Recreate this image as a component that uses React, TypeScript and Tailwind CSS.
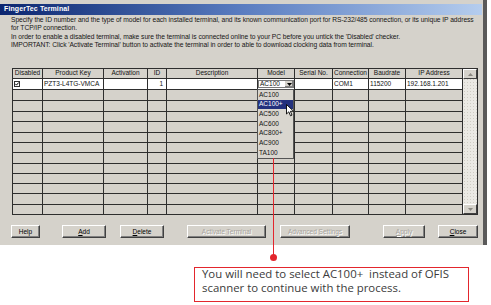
import React from 'react';

const colW = [29, 60, 43, 18, 90, 36, 37, 35, 36, 56];
const headers = ['Disabled', 'Product Key', 'Activation', 'ID', 'Description', 'Model', 'Serial No.', 'Connection', 'Baudrate', 'IP Address'];
const models = ['AC100', 'AC100+', 'AC500', 'AC600', 'AC800+', 'AC900', 'TA100'];
const emptyRows = 12;

function WinButton({ children, className = '', disabled = false }: { children: React.ReactNode; className?: string; disabled?: boolean }) {
  return (
    <div
      className={`h-[13px] flex items-center justify-center border border-t-white border-l-white border-r-[#404040] border-b-[#404040] shadow-[inset_-1px_-1px_0_#808080] text-[6.5px] ${
        disabled ? 'text-[#a7a49d] [text-shadow:1px_1px_0_#fff]' : 'text-black'
      } ${className}`}
    >
      {children}
    </div>
  );
}

function Checkbox() {
  return (
    <svg width="6" height="6" viewBox="0 0 6 6" className="ml-[1px]">
      <rect x="0.5" y="0.5" width="5" height="5" fill="#fff" stroke="#333" />
      <path d="M1.3 2.8 L2.5 4.1 L4.7 1.5" fill="none" stroke="#000" strokeWidth="1" />
    </svg>
  );
}

function Cursor() {
  return (
    <svg width="9" height="13" viewBox="0 0 9 13" className="absolute left-[274px] top-[36px]">
      <path d="M0.5 0.5 L0.5 10 L2.8 7.8 L4.5 11.8 L6 11.1 L4.4 7.3 L7.6 7.3 Z" fill="#fff" stroke="#000" strokeWidth="0.9" strokeLinejoin="round" />
    </svg>
  );
}

export default function App() {
  const cell = 'bg-[#d5d2cb]';
  return (
    <div className="relative w-[491px] h-[305px] bg-white overflow-hidden font-['Liberation_Sans',Arial,sans-serif]">
      {/* dialog window */}
      <div className="w-[487px] h-[245px] bg-[#d5d2cb] border-r-[4px] border-r-[#5a5a5a] pt-[4px]">
        <div className="h-[11px] mr-[1px] bg-gradient-to-r from-[#0c2670] via-[#5a7cc0] to-[#b5cdee] flex items-center pl-[4px]">
          <span className="text-white font-bold text-[7px] tracking-[0.1px]">FingerTec Terminal</span>
        </div>

        <div className="h-[53px] pl-[11px] pt-[1px] text-[6.7px] leading-[8.4px] text-[#151515] tracking-[-0.05px]">
          <div>Specify the ID number and the type of model for each installed terminal, and its known communication port for RS-232/485 connection, or its unique IP address</div>
          <div>for TCP/IP connection.</div>
          <div>In order to enable a disabled terminal, make sure the terminal is connected online to your PC before you untick the 'Disabled' checker.</div>
          <div>IMPORTANT: Click 'Activate Terminal' button to activate the terminal in order to able to download clocking data from terminal.</div>
        </div>

        {/* grid */}
        <div className="relative ml-[12px] flex">
          <div className="grid grid-cols-[29px_60px_43px_18px_90px_36px_37px_35px_36px_56px] grid-rows-[9px_10px_10px_10px_9px_10px_9px_9px_10px_9px_9px_9px_10px_9px] gap-px bg-[#2e2e2e] p-px pr-0 text-[6.5px] text-[#111]">
            {headers.map((h) => (
              <div key={h} className={`${cell} flex items-center justify-center leading-none`}>
                {h}
              </div>
            ))}
            <div className="bg-white flex items-center"><Checkbox /></div>
            <div className="bg-white flex items-center pl-[1px] leading-none">PZT3-L4TG-VMCA</div>
            <div className="bg-white" />
            <div className="bg-white flex items-center justify-end pr-[3px] leading-none">1</div>
            <div className="bg-white" />
            <div className="bg-white flex items-center">
              <div className="flex-1 h-[8px] flex items-center border border-[#7a7a7a] bg-white pl-[1px] leading-none">
                AC100
                <div className="ml-auto w-[9px] h-full bg-[#d5d2cb] border-l border-l-white shadow-[inset_-1px_-1px_0_#808080] flex items-center justify-center">
                  <svg width="5" height="3" viewBox="0 0 5 3"><path d="M0 0 H5 L2.5 3 Z" fill="#000" /></svg>
                </div>
              </div>
            </div>
            <div className="bg-white" />
            <div className="bg-white flex items-center pl-[1px] leading-none">COM1</div>
            <div className="bg-white flex items-center pl-[1px] leading-none">115200</div>
            <div className="bg-white flex items-center pl-[1px] leading-none">192.168.1.201</div>
            {Array.from({ length: emptyRows * colW.length }).map((_, i) => (
              <div key={i} className={cell} />
            ))}
          </div>

          {/* scrollbar */}
          <div className="w-[16px] flex flex-col border border-[#2e2e2e] bg-[#ebe9e4] bg-[radial-gradient(#cfccc4_0.6px,transparent_0.7px)] bg-[length:3px_3px]">
            <div className="h-[10px] bg-[#d5d2cb] border border-t-white border-l-white border-r-[#404040] border-b-[#404040] flex items-center justify-center">
              <svg width="5" height="3" viewBox="0 0 5 3"><path d="M0 3 H5 L2.5 0 Z" fill="#8a8780" /></svg>
            </div>
            <div className="flex-1" />
            <div className="h-[10px] bg-[#d5d2cb] border border-t-white border-l-white border-r-[#404040] border-b-[#404040] flex items-center justify-center">
              <svg width="5" height="3" viewBox="0 0 5 3"><path d="M0 0 H5 L2.5 3 Z" fill="#8a8780" /></svg>
            </div>
          </div>

          {/* open dropdown list */}
          <div className="absolute left-[245px] top-[21px] w-[37px] h-[70px] bg-[#d9d6cf] border border-[#555] flex flex-col text-[6.5px] text-[#111]">
            {models.map((m) => (
              <div
                key={m}
                className={`h-[9.7px] flex items-center pl-[1px] leading-none ${m === 'AC100+' ? 'bg-[#23317e] text-white' : ''}`}
              >
                {m}
              </div>
            ))}
          </div>
          <Cursor />
        </div>

        {/* buttons */}
        <div className="flex mt-[10px]">
          <WinButton className="ml-[11px] w-[29px]">Help</WinButton>
          <WinButton className="ml-[22px] w-[44px]"><span className="underline">A</span>dd</WinButton>
          <WinButton className="ml-[14px] w-[44px]"><span className="underline">D</span>elete</WinButton>
          <WinButton disabled className="ml-[23px] w-[79px]">Activate Terminal</WinButton>
          <WinButton disabled className="ml-[14px] w-[70px]">Advanced Settings</WinButton>
          <WinButton disabled className="ml-[33px] w-[42px]"><span className="underline">A</span>pply</WinButton>
          <WinButton className="ml-[13px] w-[40px]"><span className="underline">C</span>lose</WinButton>
        </div>
      </div>

      {/* callout connector */}
      <div className="absolute left-[273px] top-[158px] w-px h-[99px] bg-[#e3262d]" />
      <div className="absolute left-[269.5px] top-[253.5px] w-[7px] h-[7px] rounded-full bg-[#e3262d]" />

      {/* callout box */}
      <div className="ml-[194px] mt-[22px] w-[275px] h-[35px] border border-[#e3262d] pl-[7px] font-['Open_Sans',sans-serif] text-[11.4px] leading-[13.5px] text-[#3b3b3b]">
        <div className="-mt-[1px]">You will need to select AC100+&nbsp; instead of OFIS</div>
        <div>scanner to continue with the process.</div>
      </div>
    </div>
  );
}
